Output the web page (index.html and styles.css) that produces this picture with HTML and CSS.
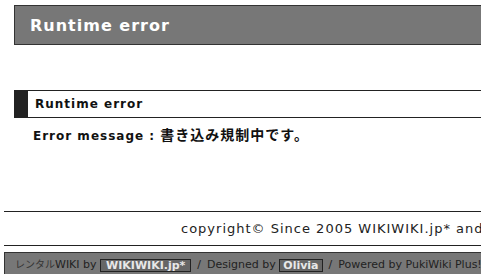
FILE: index.html
```html
<!DOCTYPE html>
<html lang="ja">
<head>
<meta charset="utf-8">
<title>Runtime error</title>
<link rel="stylesheet" href="styles.css">
</head>
<body>
<div class="page">
  <div class="header"><h1 class="title">Runtime error</h1></div>
  <div class="content">
    <h2 class="section">Runtime error</h2>
    <p class="msg">Error message : <span class="ja">書き込み規制中です。</span></p>
  </div>
  <div class="copyright">copyright© Since 2005 WIKIWIKI.jp* and Olivia All Rights Reserved.</div>
  <div class="footer">
    <span class="ja-small">レンタル</span>WIKI by <a class="box" href="#">WIKIWIKI.jp*</a><span class="sep">/</span>Designed by <a class="box box-narrow" href="#">Olivia</a><span class="sep">/</span>Powered by PukiWiki Plus! 1.4.7plus-u2-i18n
  </div>
</div>
</body>
</html>
```
FILE: styles.css
```css
html, body {
  margin: 0;
  padding: 0;
  background: #fff;
  overflow: hidden;
}
.page {
  width: 700px;
  font-family: "DejaVu Sans", Verdana, sans-serif;
  color: #111;
}
.header {
  margin: 5px 0 0 14px;
  height: 38px;
  background: #777;
  border: 1px solid #333;
  border-right: none;
  display: flex;
  align-items: center;
  padding-left: 15px;
}
.title {
  margin: 0;
  font-size: 16px;
  font-weight: bold;
  letter-spacing: 1px;
  color: #fff;
}
.content {
  margin-left: 14px;
  padding-top: 45px;
  height: 121px;
}
.section {
  margin: 0;
  height: 26px;
  border-top: 1px solid #222;
  border-bottom: 1px solid #222;
  border-left: 14px solid #222;
  padding-left: 7px;
  display: flex;
  align-items: center;
  font-size: 12px;
  font-weight: bold;
  letter-spacing: 1px;
  color: #111;
}
.msg {
  margin: 7px 0 0 19px;
  line-height: 18px;
  font-size: 12px;
  font-weight: bold;
  letter-spacing: 1px;
  color: #111;
}
.ja {
  font-family: "Noto Sans CJK JP", sans-serif;
  font-size: 14px;
  letter-spacing: 1px;
  font-weight: bold;
}
.copyright {
  margin-left: 4px;
  border-top: 1px solid #222;
  border-bottom: 1px solid #222;
  height: 33px;
  display: flex;
  align-items: center;
  padding-left: 177px;
  font-size: 13px;
  letter-spacing: 1px;
  white-space: nowrap;
  color: #222;
}
.footer {
  margin: 6px 0 0 4px;
  height: 30px;
  background: #777;
  border: 1px solid #333;
  padding: 4px 0 0 10px;
  box-sizing: border-box;
  font-size: 11px;
  line-height: 14px;
  color: #222;
  white-space: nowrap;
}
.ja-small {
  font-family: "Noto Sans CJK JP", sans-serif;
  font-size: 10px;
  color: #333;
}
.box {
  display: inline-block;
  border: 1px solid #222;
  background: #666;
  color: #e8e8e8;
  font-weight: bold;
  text-decoration: none;
  line-height: 11px;
  padding: 0 5px;
  vertical-align: middle;
}
.box-narrow {
  padding: 0 3px;
}
.sep {
  margin: 0 6px;
}
```
